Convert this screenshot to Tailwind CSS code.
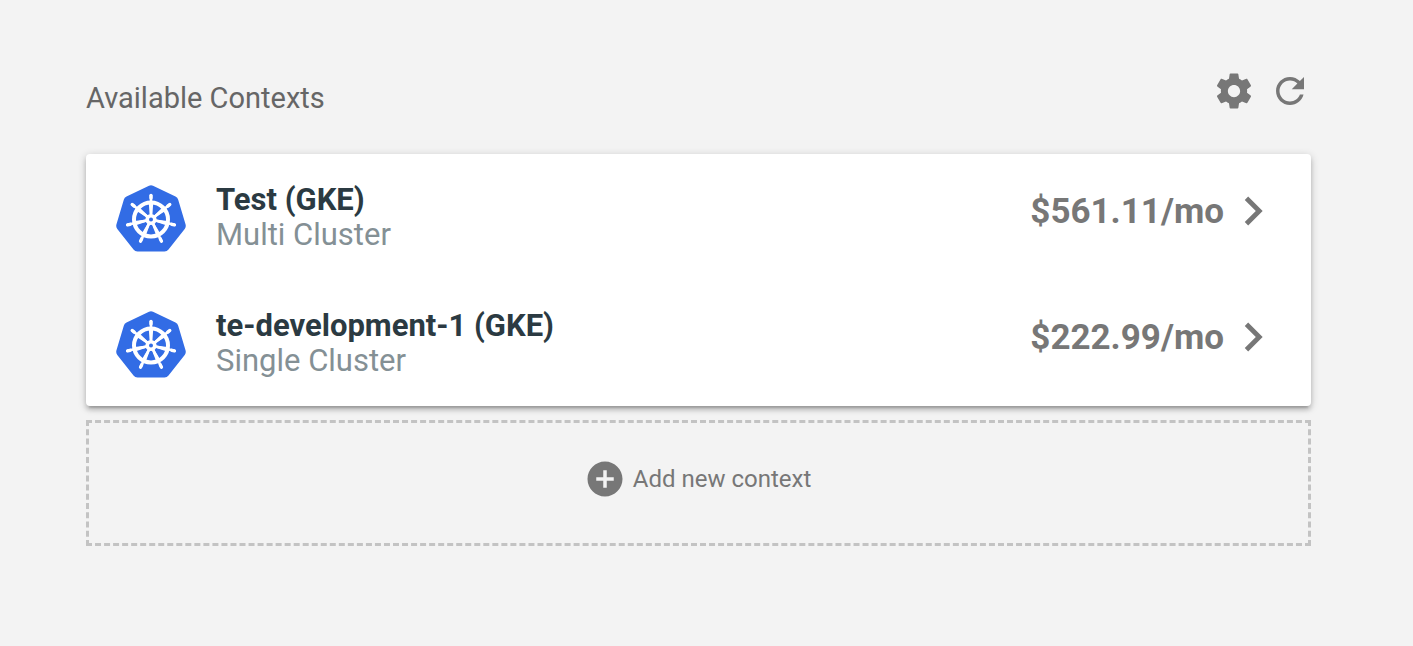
<!DOCTYPE html>
<html lang="en">
<head>
<meta charset="utf-8">
<meta name="viewport" content="width=device-width, initial-scale=1">
<title>Available Contexts</title>
<script src="https://cdn.jsdelivr.net/npm/@tailwindcss/browser@4"></script>
</head>
<body class="min-h-screen bg-[#f3f3f3] font-['Roboto',sans-serif] text-[#777]">
<svg class="hidden" aria-hidden="true">
  <symbol id="kube" viewBox="0 0 70 70">
    <path fill="#326ce5" d="M33 1.700Q35 .7 37 1.700L59.500 12.400Q61.600 13.400 62.200 15.700L69.600 40.500Q70.200 43 68.700 45L52.500 65.500Q51 67.500 48.500 67.500H21.500Q19 67.500 17.500 65.500L1.300 45Q-.2 43 .4 40.500L7.800 15.700Q8.400 13.400 10.500 12.400Z"/>
    <g fill="none" stroke="#fff" stroke-linecap="round">
      <circle cx="35" cy="35.500" r="17" stroke-width="4"/>
      <g id="spoke">
        <path stroke-width="2.600" d="M35 31V11.500"/>
        <path stroke-width="3.400" d="M35 14V11.500"/>
        <path fill="#fff" stroke="none" d="M32.800 19.500h4.400l-1 11h-2.400z"/>
      </g>
      <use href="#spoke" transform="rotate(51.430 35 35.500)"/>
      <use href="#spoke" transform="rotate(102.860 35 35.500)"/>
      <use href="#spoke" transform="rotate(154.290 35 35.500)"/>
      <use href="#spoke" transform="rotate(205.710 35 35.500)"/>
      <use href="#spoke" transform="rotate(257.140 35 35.500)"/>
      <use href="#spoke" transform="rotate(308.570 35 35.500)"/>
      <circle cx="35" cy="35.500" r="3.800" stroke-width="3.600"/>
    </g>
  </symbol>
  <symbol id="chevron" viewBox="0 0 24 24"><path d="M10 6 8.590 7.410 13.170 12l-4.580 4.590L10 18l6-6z"/></symbol>
</svg>
<main class="pl-[86px] pt-[70px] pr-[102px]">
  <header class="flex h-[84px] items-start justify-between">
    <h1 class="pt-2 text-[29px] leading-10 text-[#666]">Available Contexts</h1>
    <div class="flex gap-[14px]">
      <button type="button" aria-label="Settings" class="size-[42px]">
        <svg class="size-full fill-current" viewBox="0 0 24 24"><path d="M19.430 12.980c.04-.32.07-.64.07-.98s-.03-.66-.07-.98l2.110-1.650c.19-.15.24-.42.12-.64l-2-3.460c-.12-.22-.39-.3-.61-.22l-2.490 1c-.52-.4-1.080-.73-1.690-.98l-.38-2.650C14.460 2.180 14.250 2 14 2h-4c-.25 0-.46.18-.49.42l-.38 2.650c-.61.25-1.170.59-1.690.98l-2.490-1c-.23-.09-.49 0-.61.22l-2 3.460c-.13.22-.07.49.12.64l2.110 1.650c-.04.32-.07.65-.07.98s.03.66.07.98l-2.110 1.650c-.19.15-.24.42-.12.64l2 3.460c.12.22.39.3.61.22l2.490-1c.52.4 1.080.73 1.690.98l.38 2.650c.03.24.24.42.49.42h4c.25 0 .46-.18.49-.42l.38-2.650c.61-.25 1.170-.59 1.690-.98l2.490 1c.23.09.49 0 .61-.22l2-3.460c.12-.22.07-.49-.12-.64zM12 15.500c-1.930 0-3.500-1.570-3.500-3.500s1.570-3.500 3.500-3.500 3.500 1.570 3.500 3.500-1.570 3.500-3.500 3.500z"/></svg>
      </button>
      <button type="button" aria-label="Refresh" class="size-[42px]">
        <svg class="size-full fill-current" viewBox="0 0 24 24"><path d="M17.650 6.350C16.200 4.900 14.210 4 12 4c-4.420 0-7.990 3.580-7.990 8s3.570 8 7.990 8c3.730 0 6.840-2.550 7.730-6h-2.080c-.82 2.330-3.040 4-5.650 4-3.310 0-6-2.690-6-6s2.690-6 6-6c1.660 0 3.140.69 4.220 1.780L13 11h7V4z"/></svg>
      </button>
    </div>
  </header>
  <ul class="rounded-[4px] bg-white shadow-[0_2px_9px_rgba(0,0,0,0.2),0_4px_4px_rgba(0,0,0,0.14),0_5px_2px_-3px_rgba(0,0,0,0.14)]">
    <li>
      <a href="#test" class="flex h-[126px] items-start pr-[29px] pl-[30px] pt-7">
        <svg class="mt-[2px] size-[70px] shrink-0" aria-hidden="true"><use href="#kube"/></svg>
        <span class="ml-[30px] flex-1 text-[31px] leading-[35px]">
          <span class="block font-bold text-[#2b3a42]">Test (GKE)</span>
          <span class="block text-[#849095]">Multi Cluster</span>
        </span>
        <span class="text-[35px] leading-[60px] font-bold">$561.11/mo</span>
        <svg class="size-[58px] shrink-0 fill-current" aria-hidden="true"><use href="#chevron"/></svg>
      </a>
    </li>
    <li>
      <a href="#te-development-1" class="flex h-[126px] items-start pr-[29px] pl-[30px] pt-7">
        <svg class="mt-[2px] size-[70px] shrink-0" aria-hidden="true"><use href="#kube"/></svg>
        <span class="ml-[30px] flex-1 text-[31px] leading-[35px]">
          <span class="block font-bold text-[#2b3a42]">te-development-1 (GKE)</span>
          <span class="block text-[#849095]">Single Cluster</span>
        </span>
        <span class="text-[35px] leading-[60px] font-bold">$222.99/mo</span>
        <svg class="size-[58px] shrink-0 fill-current" aria-hidden="true"><use href="#chevron"/></svg>
      </a>
    </li>
  </ul>
  <button type="button" class="mt-[14px] flex h-[126px] w-full items-center justify-center gap-[7px] border-3 border-dashed border-[#c3c3c3] pr-[2px] pb-[9px] text-[24px]">
    <svg class="size-[42px] fill-current" viewBox="0 0 24 24" aria-hidden="true"><path d="M12 2C6.480 2 2 6.480 2 12s4.480 10 10 10 10-4.480 10-10S17.520 2 12 2zm5 11h-4v4h-2v-4H7v-2h4V7h2v4h4z"/></svg>
    <span>Add new context</span>
  </button>
</main>
</body>
</html>
